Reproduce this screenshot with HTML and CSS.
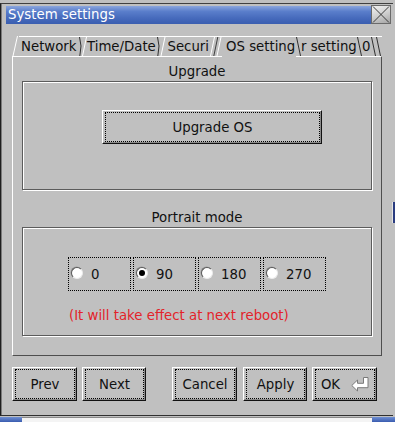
FILE: index.html
```html
<!DOCTYPE html>
<html>
<head>
<meta charset="utf-8">
<title>System settings</title>
<link rel="stylesheet" href="styles.css">
</head>
<body>
<div class="screen">
  <div class="window">
    <div class="titlerow">
      <div class="title">System settings</div>
      <div class="close">
        <svg width="18" height="17" viewBox="0 0 18 17"><line x1="1" y1="0.5" x2="17" y2="16.5" stroke="#3a3a3a" stroke-width="1"/><line x1="17" y1="0.5" x2="1" y2="16.5" stroke="#3a3a3a" stroke-width="1"/></svg>
      </div>
    </div>

    <div class="tabs">
      <svg class="sep" width="7" height="20" viewBox="0 0 7 20"><line x1="1" y1="20" x2="5.5" y2="0" stroke="#fff"/></svg>
      <div class="tabstrip">
        <div class="tab t-network">Network</div>
        <svg class="sep" width="8" height="19" viewBox="0 0 8 19"><path d="M0.5 0 L2 9 L0.8 19" stroke="#303030" fill="none"/><line x1="3.5" y1="19" x2="7.5" y2="0" stroke="#fff"/></svg>
        <div class="tab t-time">Time/Date</div>
        <svg class="sep" width="9" height="19" viewBox="0 0 9 19"><path d="M0.5 0 L2 9 L0.8 19" stroke="#303030" fill="none"/><line x1="4" y1="19" x2="8" y2="0" stroke="#fff"/></svg>
        <div class="tab t-sec">Securi</div>
        <svg class="sep" width="12" height="19" viewBox="0 0 12 19"><line x1="0.5" y1="19" x2="4.5" y2="0" stroke="#fff"/><line x1="3.8" y1="19" x2="7.8" y2="0" stroke="#404040"/><line x1="7" y1="19" x2="11" y2="0" stroke="#fff"/></svg>
        <div class="tab t-active">OS setting</div>
        <svg class="sep" width="5" height="19" viewBox="0 0 5 19"><line x1="0.5" y1="0" x2="4.5" y2="19" stroke="#303030"/></svg>
        <div class="tab t-other">r setting</div>
        <svg class="sep" width="5" height="19" viewBox="0 0 5 19"><line x1="0.5" y1="0" x2="4.5" y2="19" stroke="#303030"/></svg>
        <div class="tab t-zero">0</div>
        <svg class="sep" width="11" height="19" viewBox="0 0 11 19"><line x1="0.5" y1="0" x2="4.5" y2="19" stroke="#303030"/><line x1="5.5" y1="0" x2="9.5" y2="19" stroke="#303030"/></svg>
      </div>
    </div>

    <div class="pane">
      <div class="glabel">Upgrade</div>
      <div class="group">
        <button class="btn btn-upgrade"><span class="focus">Upgrade OS</span></button>
      </div>
      <div class="glabel glabel-2">Portrait mode</div>
      <div class="group">
        <div class="radios">
          <div class="cell"><span class="radio"></span><span class="cell-label">0</span></div>
          <div class="cell"><span class="radio checked"></span><span class="cell-label">90</span></div>
          <div class="cell"><span class="radio"></span><span class="cell-label">180</span></div>
          <div class="cell"><span class="radio"></span><span class="cell-label">270</span></div>
        </div>
        <div class="note">(It will take effect at next reboot)</div>
      </div>
    </div>

    <div class="buttons">
      <button class="btn b-prev"><span class="focus">Prev</span></button>
      <button class="btn b-next"><span class="focus">Next</span></button>
      <button class="btn b-cancel"><span class="focus">Cancel</span></button>
      <button class="btn b-apply"><span class="focus">Apply</span></button>
      <button class="btn b-ok"><span class="focus">OK
        <svg class="enter" width="18" height="15" viewBox="0 0 18 15"><path d="M0.8 8.5 L6.5 3 L6.5 6.3 L12.5 6.3 L12.5 0.5 L17 0.5 L17 10.7 L6.5 10.7 L6.5 14 Z" fill="#fff" stroke="#7a7a7a" stroke-width="1" stroke-linejoin="miter"/></svg>
      </span></button>
    </div>
  </div>
  <div class="taskbar">
    <div class="tb-left"></div>
    <div class="tb-mid"></div>
    <div class="tb-right"></div>
  </div>
  <div class="desk-blip"></div>
</div>
</body>
</html>
```
FILE: styles.css
```css
* { box-sizing: border-box; }

body {
  margin: 0;
  background: #c0c0c0;
  font-family: "DejaVu Sans", "Liberation Sans", sans-serif;
  font-size: 13.3px;
  color: #111;
}

.screen {
  position: relative;
  width: 395px;
  height: 422px;
  overflow: hidden;
}

.window {
  margin-top: 3px;
  width: 393px;
  height: 413px;
  border-top: 1px solid #404040;
  border-left: 1px solid #1e1e1e;
  border-bottom: 1px solid #303030;
  background: #c0c0c0;
  box-shadow: inset 1px 0 0 #7a7a7a;
  display: flex;
  flex-direction: column;
}

/* title bar */
.titlerow {
  display: flex;
  margin: 1px 0 0 5px;
  width: 385px;
  height: 19px;
}
.title {
  flex: 1;
  margin-top: 1px;
  height: 18px;
  padding-left: 2px;
  line-height: 18px;
  color: #fff;
  background: linear-gradient(180deg, #8aa5dd 0%, #5a7ecb 30%, #4569bb 70%, #3a5eb0 100%);
  white-space: nowrap;
}
.close {
  width: 20px;
  height: 19px;
  border: 1px solid #6a6a6a;
  background: linear-gradient(160deg, #f2f2f2 0%, #d0d0d0 50%, #a4a4a4 100%);
}
.close svg { display: block; }

/* tabs */
.tabs {
  display: flex;
  margin: 12px 0 0 11px;
  height: 20px;
}
.sep { display: block; flex-shrink: 0; }
.tabstrip {
  display: flex;
  height: 20px;
  border-top: 1px solid #fff;
}
.tab {
  height: 19px;
  padding-top: 2px;
  line-height: 16px;
  white-space: nowrap;
  flex-shrink: 0;
}
.t-network { width: 60px; padding-left: 2px; }
.t-time { width: 70px; padding-left: 0; }
.t-sec { width: 44px; padding-left: 1.5px; }
.t-active {
  width: 74px;
  padding-left: 4px;
  height: 20px;
  position: relative;
  z-index: 1;
  background: #c0c0c0;
}
.t-other { width: 56px; padding-left: 0; }
.t-zero { width: 9px; padding-left: 0; }

/* pane */
.pane {
  margin-left: 11px;
  width: 370px;
  height: 300px;
  border-top: 1px solid #fff;
  border-left: 1px solid #fff;
  border-right: 1px solid #4e4e4e;
  border-bottom: 1px solid #4e4e4e;
  padding: 7px 0 0 9px;
}
.glabel {
  width: 350px;
  text-align: center;
  line-height: 16px;
}
.glabel-2 { margin-top: 20px; }
.group {
  width: 350px;
  height: 109px;
  margin-top: 1px;
  border: 1px solid #5c5c5c;
  box-shadow: 1px 1px 0 #fff, inset 1px 1px 0 #fff;
}

/* buttons */
.btn {
  display: block;
  margin: 0;
  padding: 1px 1px 1px 2px;
  height: 34px;
  font: inherit;
  color: #111;
  background: #c0c0c0;
  border-style: solid;
  border-width: 1px;
  border-color: #fff #111 #111 #fff;
  box-shadow: inset -1px -1px 0 #8a8a8a;
  flex-shrink: 0;
}
.focus {
  display: flex;
  align-items: center;
  justify-content: center;
  height: 100%;
  padding-top: 1px;
  border: 1px dotted #000;
  line-height: 16px;
  white-space: nowrap;
}
.btn-upgrade {
  width: 220px;
  margin: 28px 0 0 79px;
}

/* radios */
.radios {
  display: flex;
  gap: 2px;
  margin: 29px 0 0 45px;
}
.cell {
  width: 63px;
  height: 34px;
  border: 1px dotted #000;
  display: flex;
  align-items: flex-start;
}
.radio {
  position: relative;
  display: block;
  width: 12px;
  height: 12px;
  margin: 9px 0 0 2px;
  border-radius: 50%;
  background: #fff;
  border: 1px solid;
  border-color: #5a5a5a #ececec #ececec #5a5a5a;
  box-shadow: -0.5px -0.5px 0 #9a9a9a;
}
.radio.checked::after {
  content: "";
  position: absolute;
  left: 2px;
  top: 2px;
  width: 6px;
  height: 6px;
  border-radius: 50%;
  background: #000;
}
.cell-label {
  margin: 9px 0 0 8px;
  line-height: 16px;
}
.note {
  margin: 17px 0 0 46px;
  line-height: 16px;
  color: #e3232a;
  white-space: nowrap;
}

/* bottom buttons */
.buttons {
  display: flex;
  margin: 11px 0 0 11px;
}
.b-prev { width: 65px; }
.b-next { width: 64px; margin-left: 5px; }
.b-cancel { width: 65px; margin-left: 26px; }
.b-apply { width: 64px; margin-left: 6px; }
.b-ok { width: 65px; margin-left: 5px; }
.enter { display: block; margin-left: 11px; margin-top: -1px; }

/* desktop behind */
.taskbar {
  display: flex;
  height: 6px;
  padding-top: 1px;
}
.tb-left {
  width: 22px;
  background: linear-gradient(180deg, #6f8fd2, #3a5cb0);
}
.tb-mid {
  flex: 1;
  background: #f4f4f4;
  border-top: 1px solid #8a8a8a;
}
.tb-right {
  width: 23px;
  background: linear-gradient(180deg, #6f8fd2, #3a5cb0);
}
.desk-blip {
  position: absolute;
  left: 392px;
  top: 202px;
  width: 3px;
  height: 21px;
  border-left: 1px solid #e4e4e4;
  background: #2a3c80;
}
```
